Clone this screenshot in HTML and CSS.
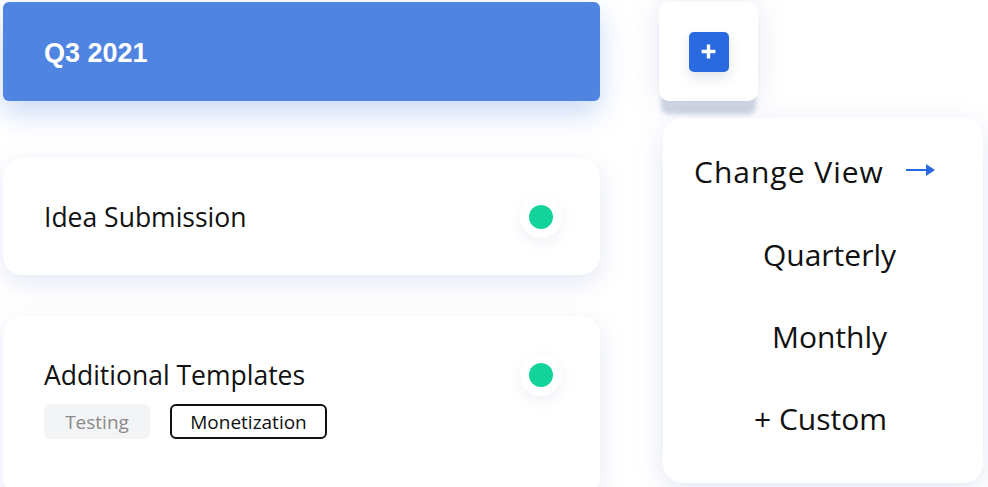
FILE: index.html
```html
<!DOCTYPE html>
<html>
<head>
<meta charset="utf-8">
<link rel="stylesheet" href="styles.css">
</head>
<body>
<div class="page">
  <div class="left">
    <div class="quarter">Q3 2021</div>
    <div class="card card-idea">
      <div class="card-main">
        <div class="card-title">Idea Submission</div>
      </div>
      <span class="dot"></span>
    </div>
    <div class="card card-templates">
      <div class="card-main">
        <div class="card-title">Additional Templates</div>
        <div class="tags">
          <span class="tag tag-muted">Testing</span>
          <span class="tag tag-outline">Monetization</span>
        </div>
      </div>
      <span class="dot"></span>
    </div>
  </div>
  <div class="right">
    <div class="add-box">
      <span class="add-btn">
        <svg width="17" height="17" viewBox="0 0 16 16"><path d="M8 1.5v13M1.5 8h13" stroke="#fff" stroke-width="3.2" stroke-linecap="butt"/></svg>
      </span>
    </div>
    <div class="menu">
      <div class="menu-head">
        <span class="menu-title">Change View</span>
        <svg class="arrow" width="30" height="14" viewBox="0 0 30 14"><path d="M0 7h22" stroke="#2a6ae0" stroke-width="2"/><path d="M20 1l9 6-9 6z" fill="#2a6ae0"/></svg>
      </div>
      <div class="menu-item menu-first">Quarterly</div>
      <div class="menu-item">Monthly</div>
      <div class="menu-item menu-custom">+ Custom</div>
    </div>
  </div>
</div>
</body>
</html>
```
FILE: styles.css
```css
html, body {
  margin: 0;
  padding: 0;
  background: #ffffff;
}
body {
  font-family: "Open Sans", "Noto Sans", sans-serif;
  color: #111;
  width: 988px;
  height: 487px;
  overflow: hidden;
}
.page {
  display: flex;
  align-items: flex-start;
  padding: 2px 0 0 3px;
}
.left {
  width: 597px;
  display: flex;
  flex-direction: column;
}
.quarter {
  height: 99px;
  box-sizing: border-box;
  background: #4f84e0;
  border-radius: 6px;
  box-shadow: 0 12px 28px rgba(79, 132, 224, 0.3);
  color: #fff;
  font-family: "Liberation Sans", Arial, sans-serif;
  font-weight: bold;
  font-size: 27px;
  display: flex;
  align-items: center;
  padding: 3px 0 0 41px;
}
.card {
  background: #fff;
  border-radius: 20px;
  box-shadow: 0 8px 26px rgba(90, 110, 200, 0.15);
  display: flex;
  align-items: flex-start;
  padding: 0 47px 0 41px;
  box-sizing: border-box;
}
.card-idea {
  margin-top: 57px;
  height: 117px;
  align-items: center;
}
.card-templates {
  margin-top: 41px;
  height: 180px;
  padding-top: 41px;
}
.card-main {
  flex: 1;
}
.card-title {
  font-size: 26.5px;
  line-height: 36px;
  color: #111;
}
.dot {
  width: 24px;
  height: 24px;
  border-radius: 50%;
  background: #12d49a;
  box-shadow: 0 0 0 9px #fff, 0 5px 14px 9px rgba(140, 150, 190, 0.13);
  flex: none;
}
.card-templates .dot {
  margin-top: 6px;
}
.tags {
  display: flex;
  gap: 20px;
  margin-top: 11px;
}
.tag {
  height: 35px;
  box-sizing: border-box;
  display: inline-flex;
  align-items: center;
  font-size: 19px;
  border-radius: 6px;
}
.tag-muted {
  width: 106px;
  justify-content: center;
  background: #f3f4f6;
  color: #8a8a8a;
}
.tag-outline {
  width: 157px;
  justify-content: center;
  border: 2px solid #111;
  color: #111;
}
.right {
  margin-left: 59px;
  display: flex;
  flex-direction: column;
}
.add-box {
  width: 99px;
  height: 99px;
  background: #fff;
  border-radius: 10px;
  box-shadow: 0 15px 4px -2px #ccd3e0, 0 0 30px rgba(140, 150, 200, 0.22);
  display: flex;
  align-items: center;
  justify-content: center;
}
.add-btn {
  width: 40px;
  height: 40px;
  border-radius: 5px;
  background: #2a6ae0;
  box-shadow: 0 6px 12px rgba(120, 130, 170, 0.22);
  display: flex;
  align-items: center;
  justify-content: center;
}
.menu {
  margin-top: 17px;
  margin-left: 4px;
  width: 320px;
  height: 365px;
  box-sizing: border-box;
  background: #fff;
  border-radius: 20px;
  box-shadow: 0 8px 30px rgba(90, 110, 200, 0.16);
  padding: 32px 0 0 31px;
  font-size: 30px;
}
.menu-head {
  display: flex;
  align-items: center;
  height: 42px;
  gap: 22px;
}
.menu-title {
  letter-spacing: 1px;
}
.arrow {
  margin-top: -3px;
}
.menu-item {
  height: 42px;
  line-height: 42px;
  margin-top: 40px;
  text-align: center;
  padding-right: 18px;
}
.menu-first {
  margin-top: 42px;
}
.menu-custom {
  padding-right: 36px;
}
```
